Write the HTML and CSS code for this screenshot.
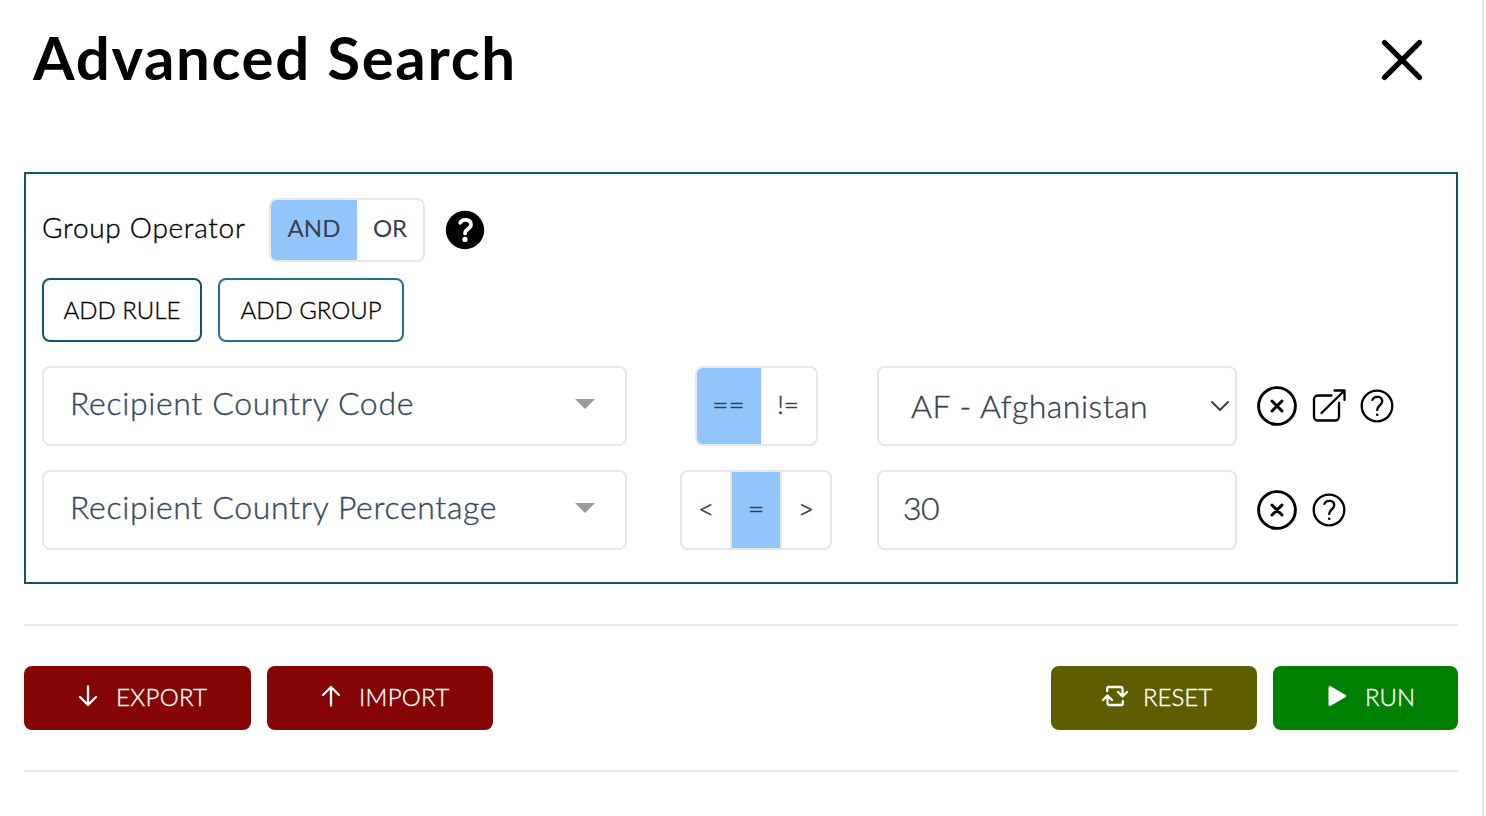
FILE: index.html
```html
<!DOCTYPE html>
<html lang="en">
<head>
<meta charset="utf-8">
<title>Advanced Search</title>
<link rel="stylesheet" href="styles.css">
</head>
<body>
<main class="panel">
  <header class="header">
    <h1 class="title">Advanced Search</h1>
    <svg class="close" width="42" height="42" viewBox="0 0 42 42"><path d="M3.6 3.6 38.4 38.4M38.4 3.6 3.6 38.4"/></svg>
  </header>

  <section class="group">
    <div class="operator">
      <span class="operator-label">Group Operator</span>
      <div class="segment segment-operator">
        <span class="option option-and selected">AND</span>
        <span class="option option-or">OR</span>
      </div>
      <svg class="help-solid" width="40" height="40" viewBox="0 0 40 40"><circle class="disc" cx="20" cy="20" r="19.2"/><path class="mark" d="M15.2 12.700C17.2 8.400 26 8.700 26 14.800C26 19 20 18.800 20 23.400"/><circle class="point" cx="20" cy="29.4" r="2.6"/></svg>
    </div>
    <div class="actions">
      <button class="outline outline-rule">ADD RULE</button>
      <button class="outline outline-group">ADD GROUP</button>
    </div>
    <div class="rule">
      <div class="field picker"><span class="picker-value">Recipient Country Code</span><i class="caret"></i></div>
      <div class="compare"><div class="segment">
        <span class="option option-eq symbol selected">==</span>
        <span class="option option-ne symbol">!=</span>
      </div></div>
      <div class="field select"><span class="select-value">AF - Afghanistan</span>
        <svg class="chevron" width="20" height="12" viewBox="0 0 20 12"><path d="M2 2 10 10 18 2"/></svg>
      </div>
      <div class="tools">
        <svg class="icon" width="40" height="40" viewBox="0 0 40 40"><circle class="bold" cx="20" cy="20" r="18.4"/><path class="cross" d="M15 15 25 25M25 15 15 25"/></svg>
        <svg class="icon icon-link" width="36" height="36" viewBox="0 0 36 36"><path d="M20.5 7.5H7A4 4 0 0 0 3 11.5V28.5A4 4 0 0 0 7 32.5H24A4 4 0 0 0 28 28.5V15M10.500 25 33 3M23.500 2.500H33.500V12"/></svg>
        <svg class="icon" width="34" height="34" viewBox="0 0 34 34"><circle cx="17" cy="17" r="15.3"/><path d="M12.4 10.9C14.1 6.3 22.3 7 22.2 12.2C22.1 16.4 17.2 16.5 17.2 21"/><circle class="point" cx="17.2" cy="25.7" r="1.3"/></svg>
      </div>
    </div>
    <div class="rule">
      <div class="field picker"><span class="picker-value">Recipient Country Percentage</span><i class="caret"></i></div>
      <div class="compare"><div class="segment segment-divided">
        <span class="option symbol">&lt;</span>
        <span class="option symbol selected">=</span>
        <span class="option symbol">&gt;</span>
      </div></div>
      <div class="field number">30</div>
      <div class="tools">
        <svg class="icon" width="40" height="40" viewBox="0 0 40 40"><circle class="bold" cx="20" cy="20" r="18.4"/><path class="cross" d="M15 15 25 25M25 15 15 25"/></svg>
        <svg class="icon icon-help" width="34" height="34" viewBox="0 0 34 34"><circle cx="17" cy="17" r="15.3"/><path d="M12.4 10.9C14.1 6.3 22.3 7 22.2 12.2C22.1 16.4 17.2 16.5 17.2 21"/><circle class="point" cx="17.2" cy="25.7" r="1.3"/></svg>
      </div>
    </div>
  </section>

  <footer class="footer">
    <button class="solid export"><svg width="20" height="22" viewBox="0 0 20 22"><path d="M10 1.5V20M2 12 10 20 18 12"/></svg>EXPORT</button>
    <button class="solid import"><svg width="20" height="22" viewBox="0 0 20 22"><path d="M10 20.5V2M2 10 10 2 18 10"/></svg>IMPORT</button>
    <button class="solid reset"><svg width="26" height="22" viewBox="0 0 26 22"><path d="M5.2 6V3.5Q5.2 2 6.7 2H18.5Q20.5 2 20.5 4V11M16 7 20.5 11.5 25 7M20.8 16V18.5Q20.8 20 19.3 20H7.5Q5.5 20 5.5 18V11M1 15 5.5 10.5 10 15"/></svg>RESET</button>
    <button class="solid run"><svg width="20" height="22" viewBox="0 0 20 22"><path class="play" d="M3 2.5 17.5 11 3 19.5Z"/></svg>RUN</button>
  </footer>
</main>
</body>
</html>
```

FILE: styles.css
```css
* { box-sizing: border-box; }

body {
  margin: 0;
  height: 816px;
  overflow: hidden;
  background: #fafafa;
  color: #000;
  font-family: Lato, "Open Sans", sans-serif;
  font-weight: 300;
  -webkit-text-stroke: .35px currentColor;
}

svg {
  flex: none;
  fill: none;
  stroke: currentColor;
  stroke-linecap: round;
  stroke-linejoin: round;
}

button { font: inherit; margin: 0; color: inherit; }

.panel {
  width: 1484px;
  height: 816px;
  padding: 0 24px;
  background: #fff;
  border-right: 2px solid #e8e8e8;
}

.header {
  display: flex;
  justify-content: space-between;
  height: 172px;
  padding: 21px 35px 0 9px;
}
.title { margin: 0; font-size: 60px; line-height: 72px; font-weight: 700; letter-spacing: 1.65px; white-space: nowrap; -webkit-text-stroke: 0; }
.close { margin-top: 18px; stroke-width: 5.4; }

.group {
  height: 412px;
  padding: 24px 16px 0;
  border: 2px solid #155366;
}

.operator { display: flex; align-items: center; height: 64px; }
.operator-label { width: 227px; padding-bottom: 7px; font-size: 28px; line-height: 34px; white-space: nowrap; letter-spacing: .72px; }

.segment {
  display: flex;
  height: 80px;
  overflow: hidden;
  border: 2px solid #e5e7eb;
  border-radius: 8px;
  color: #374151;
  font-size: 24px;
  font-weight: 400;
  -webkit-text-stroke: 0;
}
.segment-operator { height: 64px; }
.option { display: flex; align-items: center; justify-content: center; white-space: nowrap; padding-bottom: 5px; }
.symbol { padding-bottom: 4px; font-size: 28px; font-weight: 300; -webkit-text-stroke: .5px currentColor; }
.option-and { width: 86px; }
.option-or { width: 66px; }
.option-eq { width: 64px; }
.option-ne { width: 55px; font-size: 26px; }
.selected { background: #93c5fd; }
.segment-divided .option { width: 48px; }
.segment-divided .option + .option { width: 50px; border-left: 2px solid #e5e7eb; }

.help-solid { margin-left: 20px; }
.disc { fill: #000; stroke: none; }
.mark { stroke: #fff; stroke-width: 3.7; }
.help-solid .point { fill: #fff; stroke: none; }

.actions { display: flex; gap: 16px; margin-top: 16px; }
.outline {
  display: flex;
  align-items: center;
  justify-content: center;
  height: 64px;
  padding: 0 0 1px;
  background: #fff;
  border: 2px solid #155366;
  border-radius: 8px;
  font-size: 24px;
  white-space: nowrap;
}
.outline-rule { width: 160px; }
.outline-group { width: 186px; border-color: #1f7391; }

.rule {
  display: grid;
  grid-template-columns: 585px 250px 360px 1fr;
  height: 80px;
  margin-top: 24px;
}
.field {
  display: flex;
  align-items: center;
  justify-content: space-between;
  border: 2px solid #e5e7eb;
  border-radius: 8px;
  color: #374151;
  font-size: 32px;
  white-space: nowrap;
}
.picker { padding: 0 30px 8px 26px; border-color: #e8e8e8; color: #35495e; }
.picker-value { letter-spacing: .65px; }
.caret { margin-top: 4px; border: 10px solid transparent; border-width: 10px 10px 0; border-top-color: #999; }
.compare { display: flex; justify-content: center; padding-left: 8px; }
.select { padding: 0 5px 1px 32px; }
.select-value { letter-spacing: .5px; }
.chevron { stroke-width: 2; }
.number { padding: 0 24px 5px; letter-spacing: -.5px; }

.tools { display: flex; align-items: center; padding-left: 20px; }
.icon { stroke-width: 2.3; }
.bold { stroke-width: 2.9; }
.cross { stroke-width: 3; }
.icon-link { margin: 0 13.5px 0 13.5px; }
.icon-help { margin-left: 15px; }
.icon .point { fill: #000; stroke: none; }

.footer {
  display: flex;
  gap: 16px;
  height: 148px;
  margin-top: 40px;
  padding: 40px 0;
  border: solid #e5e7eb;
  border-width: 2px 0;
}
.solid {
  display: flex;
  align-items: center;
  height: 64px;
  padding: 0 0 4px;
  border: 0;
  border-radius: 8px;
  color: #fff;
  font-size: 24px;
  white-space: nowrap;
}
.solid svg { margin-right: 18px; stroke-width: 2.3; }
.export, .import { padding-left: 54px; background: #850404; letter-spacing: .3px; }
.export { width: 227px; }
.import { width: 226px; }
.reset { width: 206px; padding-left: 51px; margin-left: auto; background: #5e5e00; }
.solid.reset svg { margin-right: 15px; }
.run { width: 185px; padding-left: 54px; background: #008000; }
.solid .play { fill: #fff; stroke-width: 3; }
```
